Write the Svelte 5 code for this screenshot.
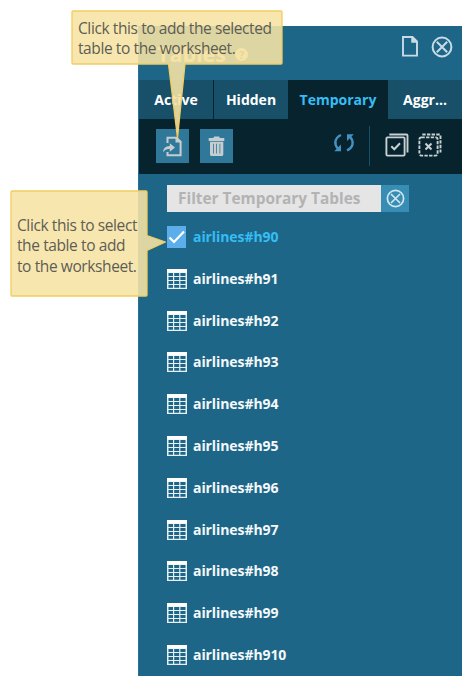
<script>
  const rows = ['90', '91', '92', '93', '94', '95', '96', '97', '98', '99', '910'];
</script>

{#snippet closeIcon(size)}
  <svg width={size} height={size} viewBox="0 0 22 22" fill="none" stroke="currentColor" stroke-width="2">
    <circle cx="11" cy="11" r="9.4" />
    <path d="M5.8 5.8 16.2 16.2M16.2 5.8 5.8 16.2" />
  </svg>
{/snippet}

<div class="page">
  <section class="panel">
    <header>
      <h1>Tables</h1>
      <span class="help">?</span>
      <div class="window">
        <svg width="16" height="21" viewBox="0 0 16 21" fill="none" stroke="currentColor" stroke-width="1.9">
          <path d="M1 1H10.5L15 5.5V19.6H1Z" /><path d="M10.2 1V5.8H15" fill="currentColor" />
        </svg>
        {@render closeIcon(22)}
      </div>
    </header>
    <nav>
      <button class="first">Active</button>
      <button>Hidden</button>
      <button class="current">Temporary</button>
      <button class="last">Aggr...</button>
    </nav>
    <div class="tools">
      <button class="tile">
        <svg width="33" height="34" viewBox="0 0 33 34" fill="none" stroke="#c6cdd1" stroke-width="2">
          <path d="M11.5 14V8.7H20.2L24.6 13V26.3H11.5V23" />
          <path d="M19.5 8V13.5H25.5V12.5L21 8Z" fill="#c6cdd1" stroke="none" />
          <path d="M13.8 14.3 19 18.5 13.8 22.7V20C10.7 19.8 9 20.7 7 23.3 7.3 19.5 9.5 17.2 13.8 17Z" fill="#c6cdd1" stroke="none" />
        </svg>
      </button>
      <button class="tile">
        <svg width="33" height="34" viewBox="0 0 33 34" fill="#c6cdd1">
          <path d="M8.7 9H13.2L14.2 7.6H19L20 9H24.3V12H8.7Z" />
          <path fill-rule="evenodd" d="M10 12.7H23.3V25.5Q23.3 27 21.8 27H11.5Q10 27 10 25.5ZM13 14.8V24.5H13.8V14.8ZM16.2 14.8V24.5H17V14.8ZM19.5 14.8V24.5H20.3V14.8Z" />
        </svg>
      </button>
      <svg class="refresh" width="22" height="20" viewBox="0 0 22 20" fill="none" stroke="#4492c2" stroke-width="2.4">
        <path d="M8 2C1.5 5 .8 11 4.8 15.5M14 17.4C20.5 14.5 21.2 8.5 17.2 4" />
        <path d="M1.2 18.2H8V11.5ZM20.8 1.2H14V8Z" fill="#4492c2" stroke="none" />
      </svg>
      <i class="divider"></i>
      <svg class="select" width="24" height="24" viewBox="0 0 24 24" fill="none" stroke="#c8d0d3" stroke-width="1.9">
        <rect x="1.4" y="4.4" width="18.2" height="18.2" rx="1" />
        <path d="M4.3 1.5H21.5Q22.5 1.5 22.5 2.5V19.5" />
        <path d="M6.3 13.2 9.3 16.2 15 10.3" stroke-width="2" />
      </svg>
      <svg class="clear" width="24" height="24" viewBox="0 0 24 24" fill="none" stroke="#c8d0d3" stroke-width="1.9">
        <rect x="1.4" y="4.4" width="18.2" height="18.2" rx="2" stroke-dasharray="3.4 1.25" />
        <path d="M4.3 1.5H21.5Q22.5 1.5 22.5 2.5V19.5" stroke-dasharray="3.4 1.25" />
        <path d="M7.5 10.5 13.5 16.5M13.5 10.5 7.5 16.5" stroke-width="2.1" />
      </svg>
    </div>
    <div class="filter">
      <div class="field">Filter Temporary Tables</div>
      <button>{@render closeIcon(19)}</button>
    </div>
    <ul>
      {#each rows as id, i}
        <li class:selected={i === 0}>
          {#if i === 0}
            <svg width="20" height="22" viewBox="0 0 20 22"><path d="M0 0H19V22H0Z" fill="#5baeea" /><path d="M2.5 11.5 7 16 17 5.6" fill="none" stroke="#fff" stroke-width="2.2" /></svg>
          {:else}
            <svg width="20" height="22" viewBox="0 0 20 22">
              <path d="M0 1H20V21H0Z" fill="#e6eff3" /><path d="M0 1H20V4.5H0Z" fill="#fff" />
              <path d="M1.5 5H6V8H1.5ZM7.2 5H12.2V8H7.2ZM13.4 5H18.5V8H13.4ZM1.5 9H6V12H1.5ZM7.2 9H12.2V12H7.2ZM13.4 9H18.5V12H13.4ZM1.5 13H6V16H1.5ZM7.2 13H12.2V16H7.2ZM13.4 13H18.5V16H13.4ZM1.5 17H6V19.7H1.5ZM7.2 17H12.2V19.7H7.2ZM13.4 17H18.5V19.7H13.4Z" fill="#1e6687" />
            </svg>
          {/if}
          <span>airlines#h{id}</span>
        </li>
      {/each}
    </ul>
  </section>

  <svg class="bubbles" width="462" height="676" viewBox="0 0 462 676" fill="#f6e4a5" fill-opacity=".89" stroke="#f1cd60" stroke-width="1.3" stroke-linejoin="round">
    <path d="M73 11H281Q282 11 282 12V63Q282 64 281 64H185L177.5 138 168.5 64H73Q72 64 72 63V12Q72 11 73 11Z" />
    <path d="M12 191H146Q147 191 147 192V235.5L165.5 242 147 250.5V295Q147 296 146 296H12Q11 296 11 295V192Q11 191 12 191Z" />
  </svg>
  <p class="tip top"><span>Click this to add the selected</span><br /><span>table to the worksheet.</span></p>
  <p class="tip side"><span>Click this to select</span><br /><span>the table to add</span><br /><span>to the worksheet.</span></p>
</div>

<style>
  .page { position: relative; width: 462px; height: 676px; overflow: hidden; box-sizing: border-box; padding: 26px 0 0 138px; background: #fff; font-family: "Open Sans", sans-serif; }
  .panel { box-sizing: border-box; height: 650px; border-left: 1px solid #247394; background: #1e6687; color: #fff; font-size: 14px; font-weight: 700; overflow: hidden; }
  svg { display: block; flex: none; }
  button { border: 0; padding: 0; margin: 0; font: inherit; color: inherit; }
  header { display: flex; height: 54px; box-sizing: border-box; padding: 10px 9px 0 18px; }
  h1 { margin: 2px 0 0; font-size: 21.5px; line-height: 32px; letter-spacing: 0; color: #f6e4a8; }
  .help { margin: 12px 0 0 9px; width: 13px; height: 13px; border-radius: 50%; background: #f6e4a8; color: #1e6687; font-size: 11px; line-height: 13px; text-align: center; }
  .window { display: flex; gap: 13px; margin-left: auto; color: #c8dce6; }
  nav { display: flex; height: 39px; background: #06232e; }
  nav button { width: 75px; background: #184f69; font-size: 14px; line-height: 38px; }
  nav .first { width: 74px; margin-right: 1px; }
  nav button:nth-child(2) { width: 74px; }
  nav .current { width: 100px; background: #06232e; color: #38bdf4; }
  nav .last { width: 74px; }
  .tools { display: flex; height: 55px; background: #06232e; padding-left: 17px; box-sizing: border-box; }
  .tile { width: 33px; height: 34px; margin: 10px 11px 0 0; background: #307899; }
  .refresh { margin: 14px 0 0 89px; }
  .divider { width: 1px; height: 40px; margin: 7px 15px 0 14px; background: #184f69; }
  .select { margin-top: 14px; }
  .clear { margin: 14px 0 0 9px; }
  .filter { display: flex; height: 27px; margin: 11px 0 0 28px; }
  .field { width: 214px; box-sizing: border-box; padding-left: 11px; background: #e5e5e5; color: #b3b3b3; font-size: 15.4px; line-height: 27px; white-space: nowrap; }
  .filter button { display: flex; align-items: center; justify-content: center; width: 28px; background: #388db4; color: #d2e7f0; }
  ul { list-style: none; padding: 0; margin: 4.2px 0 0 28px; }
  li { display: flex; align-items: center; gap: 6px; height: 41.8px; }
  li span { line-height: 20px; color: #f4f8fa; letter-spacing: -.08px; }
  li.selected span { color: #35bdf4; }
  .bubbles { position: absolute; inset: 0; }
  .tip { position: absolute; margin: 0; color: #5e5d55; font-size: 15.5px; line-height: 20.3px; white-space: nowrap; letter-spacing: -.4px; }
  .top { left: 78px; top: 18px; }
  .side { left: 17px; top: 215px; }
</style>
